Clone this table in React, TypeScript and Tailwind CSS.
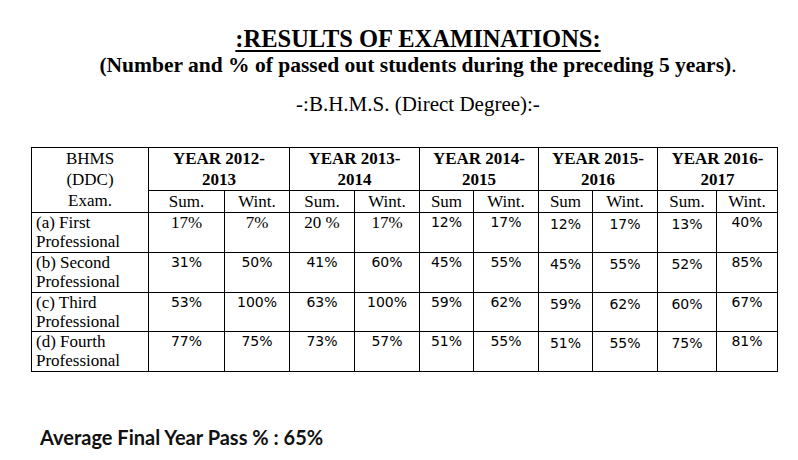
const serif = "font-['Liberation_Serif','Times_New_Roman',serif]";

const years = [
  { top: "YEAR 2012-", bottom: "2013", sub: ["Sum.", "Wint."] },
  { top: "YEAR 2013-", bottom: "2014", sub: ["Sum.", "Wint."] },
  { top: "YEAR 2014-", bottom: "2015", sub: ["Sum", "Wint."] },
  { top: "YEAR 2015-", bottom: "2016", sub: ["Sum", "Wint."] },
  { top: "YEAR 2016-", bottom: "2017", sub: ["Sum.", "Wint."] },
];

const colWidths = [117, 76, 65, 65, 65, 54, 65, 54, 65, 59, 61];

// columns of the 2015 block and 2016 Sum sit a touch lower in the scan
const lowered = [6, 7, 8];

const rows = [
  {
    label: ["(a) First", "Professional"],
    values: ["17%", "7%", "20 %", "17%", "12%", "17%", "12%", "17%", "13%", "40%"],
    serifUpTo: 4,
    h: "h-[40px]",
  },
  {
    label: ["(b) Second", "Professional"],
    values: ["31%", "50%", "41%", "60%", "45%", "55%", "45%", "55%", "52%", "85%"],
    serifUpTo: 0,
    h: "h-[40px]",
  },
  {
    label: ["(c) Third", "Professional"],
    values: ["53%", "100%", "63%", "100%", "59%", "62%", "59%", "62%", "60%", "67%"],
    serifUpTo: 0,
    h: "h-[39px]",
  },
  {
    label: ["(d) Fourth", "Professional"],
    values: ["77%", "75%", "73%", "57%", "51%", "55%", "51%", "55%", "75%", "81%"],
    serifUpTo: 0,
    h: "h-[40px]",
  },
];

export default function App() {
  return (
    <div className="w-[798px] h-[460px] bg-white text-black overflow-hidden">
      {/* headings */}
      <div className={`${serif} pl-[38px] pt-[25px] text-center`}>
        <h1 className="text-[24.5px] leading-[28px] font-bold underline decoration-2 underline-offset-[3px]">
          :RESULTS OF EXAMINATIONS:
        </h1>
        <p className="text-[21.5px] leading-[24px] font-bold">
          (Number and % of passed out students during the preceding 5 years)
          <span className="font-normal">.</span>
        </p>
        <p className="mt-[15px] text-[21px] leading-[24px]">-:B.H.M.S. (Direct Degree):-</p>
      </div>

      {/* results table */}
      <table className={`${serif} ml-[31px] mt-[31px] w-[746px] table-fixed border-collapse text-[17px]`}>
        <colgroup>
          {colWidths.map((w, i) => (
            <col key={i} style={{ width: w }} />
          ))}
        </colgroup>
        <thead>
          <tr className="h-[42px]">
            <th
              rowSpan={2}
              className="border border-black p-0 align-top text-center font-normal leading-[21px]"
            >
              BHMS
              <br />
              (DDC)
              <br />
              Exam.
            </th>
            {years.map((y) => (
              <th
                key={y.top}
                colSpan={2}
                className="border border-black p-0 align-top text-center font-bold leading-[21px]"
              >
                {y.top}
                <br />
                {y.bottom}
              </th>
            ))}
          </tr>
          <tr className="h-[22px]">
            {years.flatMap((y) =>
              y.sub.map((s, i) => (
                <th
                  key={y.top + i}
                  className="border border-black p-0 align-top text-center font-normal leading-[21px]"
                >
                  {s}
                </th>
              ))
            )}
          </tr>
        </thead>
        <tbody>
          {rows.map((r) => (
            <tr key={r.label[0]} className={r.h}>
              <td className="border border-black pl-[4px] pr-0 py-0 align-top leading-[19px]">
                {r.label[0]}
                <br />
                {r.label[1]}
              </td>
              {r.values.map((v, i) => (
                <td
                  key={i}
                  className={`border border-black p-0 align-top text-center ${
                    i < r.serifUpTo
                      ? "text-[17px] leading-[19px]"
                      : "font-['DejaVu_Sans',Tahoma,sans-serif] text-[14px] leading-[19px]"
                  } ${lowered.includes(i) ? "pt-[2px]" : ""}`}
                >
                  {v}
                </td>
              ))}
            </tr>
          ))}
        </tbody>
      </table>

      <p className="pl-[40px] mt-[53px] font-['Lato','Carlito',sans-serif] font-bold text-[20px] leading-[24px] text-[#111]">
        Average Final Year Pass % : 65%
      </p>
    </div>
  );
}
